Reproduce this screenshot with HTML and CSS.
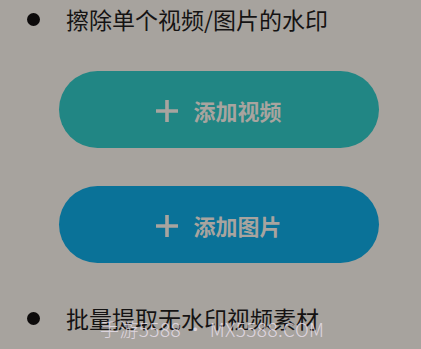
FILE: index.html
```html
<!DOCTYPE html>
<html lang="zh">
<head>
<meta charset="utf-8">
<link rel="stylesheet" href="styles.css">
</head>
<body>
<div class="page">
  <div class="item">
    <span class="dot"></span>
    <span class="label">擦除单个视频/图片的水印</span>
  </div>
  <div class="btn btn-video">
    <svg class="plus" width="22" height="22" viewBox="0 0 22 22"><path d="M11 0V22M0 11H22" stroke="#a8a49f" stroke-width="3.6" fill="none"/></svg>
    <span class="btn-text">添加视频</span>
  </div>
  <div class="btn btn-image">
    <svg class="plus" width="22" height="22" viewBox="0 0 22 22"><path d="M11 0V22M0 11H22" stroke="#a8a49f" stroke-width="3.6" fill="none"/></svg>
    <span class="btn-text">添加图片</span>
  </div>
  <div class="item item-bottom">
    <span class="dot"></span>
    <span class="label">批量提取无水印视频素材</span>
  </div>
  <div class="watermark">手游5588 · MX5588.COM</div>
</div>
</body>
</html>
```
FILE: styles.css
```css
html, body {
  margin: 0;
  padding: 0;
  background: #a7a39e;
}
.page {
  position: relative;
  width: 421px;
  height: 349px;
  overflow: hidden;
  display: flex;
  flex-direction: column;
  font-family: "Noto Sans CJK SC", "Noto Sans", sans-serif;
}
.item {
  height: 38px;
  display: flex;
  align-items: center;
  padding-left: 27px;
}
.dot {
  width: 13px;
  height: 13px;
  border-radius: 50%;
  background: #0d0b0b;
  flex: none;
}
.label {
  margin-left: 26px;
  font-size: 23px;
  color: #151313;
  white-space: nowrap;
}
.btn {
  margin-left: 59px;
  width: 320px;
  height: 77px;
  border-radius: 39px;
  display: flex;
  align-items: center;
  justify-content: center;
}
.btn-video {
  margin-top: 33px;
  background: #218684;
}
.btn-image {
  margin-top: 38px;
  background: #0a7298;
}
.plus {
  flex: none;
  margin-top: 2px;
}
.btn-text {
  margin-left: 15px;
  font-size: 22px;
  font-weight: 700;
  color: #a8a49f;
}
.item-bottom {
  margin-top: 36px;
}
.watermark {
  position: absolute;
  left: 100px;
  top: 315px;
  font-family: "Noto Sans CJK SC", sans-serif;
  font-weight: 300;
  font-size: 19px;
  letter-spacing: 0.4px;
  color: rgba(236, 226, 240, 0.8);
  white-space: nowrap;
}
```
